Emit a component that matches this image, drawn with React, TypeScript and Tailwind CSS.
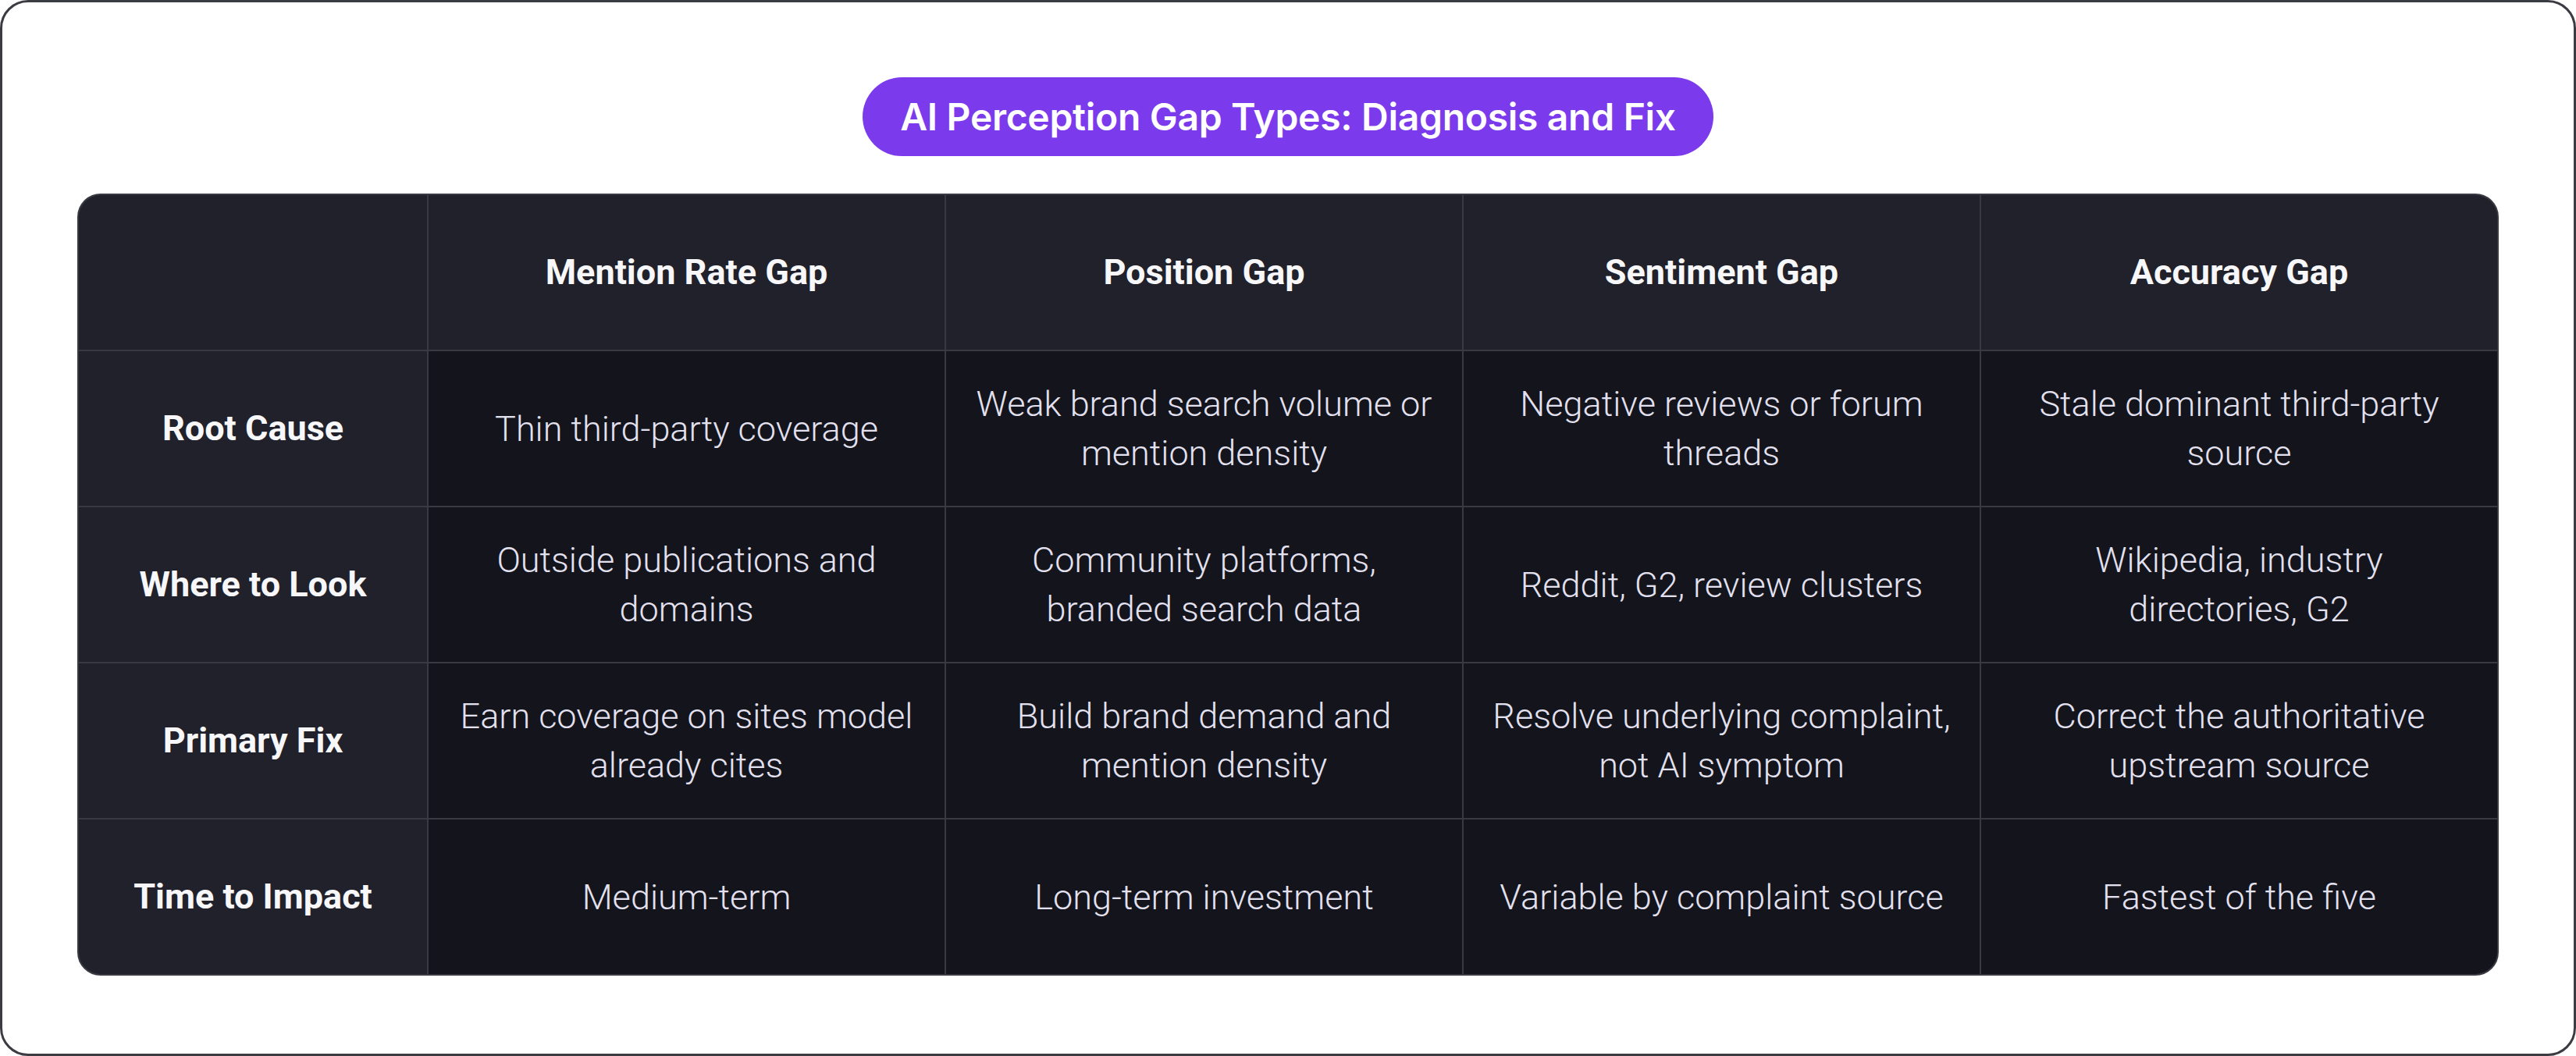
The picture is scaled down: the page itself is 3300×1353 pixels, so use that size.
import React from "react";

const cols = ["Mention Rate Gap", "Position Gap", "Sentiment Gap", "Accuracy Gap"];
const rows: { label: string; cells: string[][] }[] = [
  {
    label: "Root Cause",
    cells: [
      ["Thin third-party coverage"],
      ["Weak brand search volume or", "mention density"],
      ["Negative reviews or forum", "threads"],
      ["Stale dominant third-party", "source"],
    ],
  },
  {
    label: "Where to Look",
    cells: [
      ["Outside publications and", "domains"],
      ["Community platforms,", "branded search data"],
      ["Reddit, G2, review clusters"],
      ["Wikipedia, industry", "directories, G2"],
    ],
  },
  {
    label: "Primary Fix",
    cells: [
      ["Earn coverage on sites model", "already cites"],
      ["Build brand demand and", "mention density"],
      ["Resolve underlying complaint,", "not AI symptom"],
      ["Correct the authoritative", "upstream source"],
    ],
  },
  {
    label: "Time to Impact",
    cells: [
      ["Medium-term"],
      ["Long-term investment"],
      ["Variable by complaint source"],
      ["Fastest of the five"],
    ],
  },
];

export default function App() {
  return (
    <div className="w-[3300px] h-[1353px] bg-white">
      <div className="w-full h-full border-[3px] border-[#3b3b42] rounded-[36px] flex flex-col items-center pt-[96px]">
        <div
          className="w-[1090px] h-[101px] rounded-full bg-[#7c3aed] flex items-center justify-center text-white text-[48px] font-semibold tracking-[-0.3px]"
          style={{ fontFamily: "Inter, 'Noto Sans', sans-serif" }}
        >
          AI Perception Gap Types: Diagnosis and Fix
        </div>
        <div
          className="mt-[48px] w-[3102px] h-[1002px] rounded-[30px] border-2 border-[#393942] bg-[#393942] overflow-hidden grid grid-cols-[446px_661px_661px_661px_661px] grid-rows-5 gap-[2px]"
          style={{ fontFamily: "Roboto, 'Noto Sans', sans-serif" }}
        >
          <div className="bg-[#20212a]" />
          {cols.map((c) => (
            <div key={c} className="bg-[#20212a] flex items-center justify-center text-[#f7f7fa] text-[45px] font-bold">
              {c}
            </div>
          ))}
          {rows.map((r) => (
            <React.Fragment key={r.label}>
              <div className="bg-[#20212a] flex items-center justify-center text-[#f7f7fa] text-[45px] font-bold">
                {r.label}
              </div>
              {r.cells.map((lines, i) => (
                <div
                  key={i}
                  className="bg-[#13141c] flex flex-col items-center justify-center text-[#e3e1ef] text-[45px] font-light leading-[63px] text-center"
                >
                  {lines.map((l) => (
                    <span key={l}>{l}</span>
                  ))}
                </div>
              ))}
            </React.Fragment>
          ))}
        </div>
      </div>
    </div>
  );
}
